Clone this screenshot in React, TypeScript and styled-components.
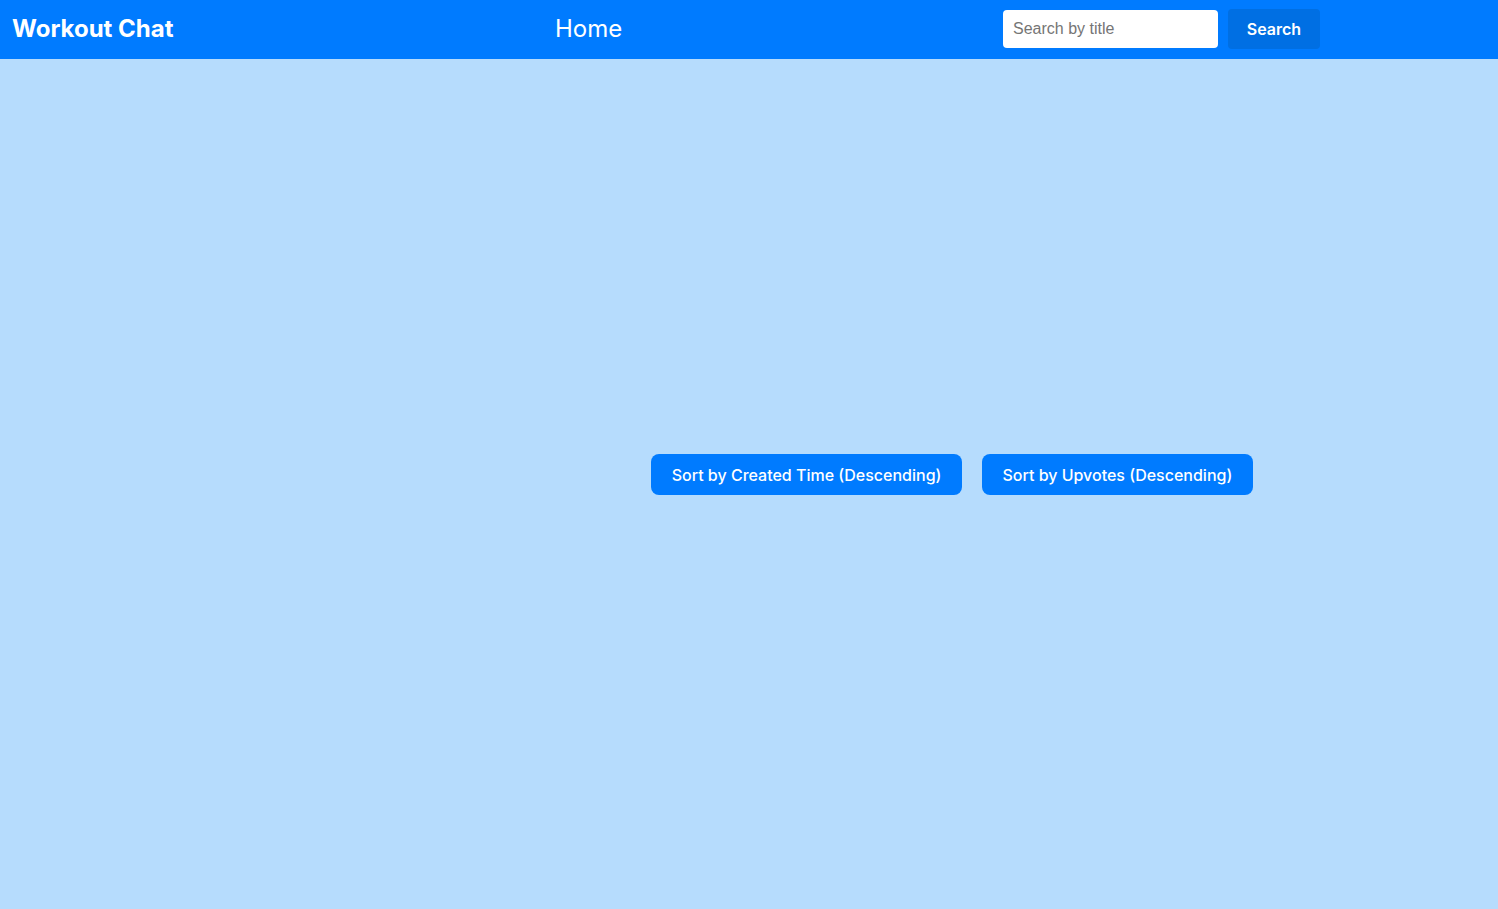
import React from "react";
import styled, { createGlobalStyle } from "styled-components";

const Global = createGlobalStyle`
  html, body { margin: 0; padding: 0; }
  body { background: #b6dcfd; font-family: Inter, "Noto Sans", sans-serif; }
  * { box-sizing: border-box; }
`;

const Page = styled.div`
  min-height: 909px;
  display: flex;
  flex-direction: column;
`;

const Header = styled.header`
  height: 59px;
  background: #007bff;
  display: grid;
  grid-template-columns: 543px 447px 1fr;
  align-items: center;
  padding-left: 13px;
`;

const Brand = styled.div`
  color: #fff;
  font-family: Inter, sans-serif;
  font-weight: 700;
  font-size: 24px;
  letter-spacing: 0;
  margin-left: -1px;
  margin-top: -3px;
`;

const NavLink = styled.div`
  color: #fff;
  font-family: Inter, sans-serif;
  font-weight: 400;
  font-size: 24px;
  margin-top: -3px;
  margin-left: -1px;
`;

const SearchForm = styled.form`
  display: flex;
  align-items: center;
  gap: 10px;
  margin-top: -1px;
`;

const SearchInput = styled.input`
  width: 215px;
  height: 38px;
  border: none;
  border-radius: 4px;
  background: #fff;
  padding: 0 10px;
  font-family: "Liberation Sans", Arial, sans-serif;
  font-size: 16px;
  color: #333;
  outline: none;
  &::placeholder { color: #757575; }
`;

const SearchButton = styled.button`
  width: 92px;
  height: 40px;
  border: none;
  border-radius: 4px;
  background: #006fe3;
  color: #fff;
  font-family: Inter, sans-serif;
  font-weight: 600;
  font-size: 16px;
  cursor: pointer;
`;

const Body = styled.div`
  flex: 1;
  display: grid;
  grid-template-columns: 406px 1fr;
`;

const Sidebar = styled.aside``;

const Main = styled.main`
  display: flex;
  justify-content: center;
  align-items: flex-start;
  padding-top: 395px;
  gap: 20px;
`;

const SortButton = styled.button`
  height: 41px;
  padding: 0 20.5px;
  border: none;
  border-radius: 8px;
  background: #007bff;
  color: #fff;
  font-family: Inter, sans-serif;
  font-weight: 500;
  font-size: 16px;
  cursor: pointer;
`;

export default function App() {
  return (
    <Page>
      <Global />
      <Header>
        <Brand>Workout Chat</Brand>
        <NavLink>Home</NavLink>
        <SearchForm onSubmit={(e) => e.preventDefault()}>
          <SearchInput placeholder="Search by title" />
          <SearchButton type="submit">Search</SearchButton>
        </SearchForm>
      </Header>
      <Body>
        <Sidebar />
        <Main>
          <SortButton>Sort by Created Time (Descending)</SortButton>
          <SortButton>Sort by Upvotes (Descending)</SortButton>
        </Main>
      </Body>
    </Page>
  );
}
